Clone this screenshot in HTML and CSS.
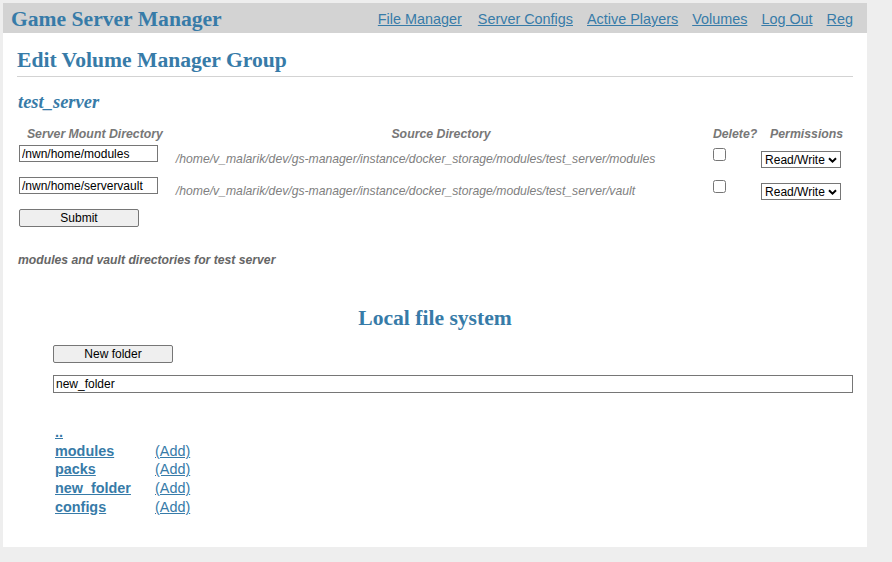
FILE: index.html
```html
<!DOCTYPE html>
<html>
<head>
<meta charset="utf-8">
<title>Edit Volume Manager Group</title>
<link rel="stylesheet" href="styles.css">
</head>
<body>
<nav class="topnav">
  <h1 class="brand">Game Server Manager</h1>
  <ul class="navlinks">
    <li><a href="#">File Manager</a></li>
    <li><a href="#">Server Configs</a></li>
    <li><a href="#">Active Players</a></li>
    <li><a href="#">Volumes</a></li>
    <li><a href="#">Log Out</a></li>
    <li><a href="#">Reg</a></li>
  </ul>
</nav>
<section class="content">
  <header class="page-header">
    <h1 class="page-title">Edit Volume Manager Group</h1>
  </header>
  <h2 class="group-name">test_server</h2>
  <form class="volume-form">
    <table class="vol-table">
      <colgroup>
        <col class="c1"><col class="c2"><col class="c3"><col class="c4">
      </colgroup>
      <thead>
        <tr>
          <th>Server Mount Directory</th>
          <th>Source Directory</th>
          <th>Delete?</th>
          <th>Permissions</th>
        </tr>
      </thead>
      <tbody>
        <tr>
          <td class="mount"><input class="mount-input" type="text" value="/nwn/home/modules"></td>
          <td class="src">/home/v_malarik/dev/gs-manager/instance/docker_storage/modules/test_server/modules</td>
          <td class="del"><input class="del-box" type="checkbox"></td>
          <td class="perm">
            <span class="select-wrap">
              <select class="perm-select"><option>Read/Write</option></select>
              <svg class="chev" width="9" height="6" viewBox="0 0 9 6"><path d="M1 1.2 L4.5 4.6 L8 1.2" fill="none" stroke="#000" stroke-width="2"/></svg>
            </span>
          </td>
        </tr>
        <tr>
          <td class="mount"><input class="mount-input" type="text" value="/nwn/home/servervault"></td>
          <td class="src">/home/v_malarik/dev/gs-manager/instance/docker_storage/modules/test_server/vault</td>
          <td class="del"><input class="del-box" type="checkbox"></td>
          <td class="perm">
            <span class="select-wrap">
              <select class="perm-select"><option>Read/Write</option></select>
              <svg class="chev" width="9" height="6" viewBox="0 0 9 6"><path d="M1 1.2 L4.5 4.6 L8 1.2" fill="none" stroke="#000" stroke-width="2"/></svg>
            </span>
          </td>
        </tr>
      </tbody>
    </table>
    <button class="btn submit-btn" type="button">Submit</button>
  </form>
  <p class="note">modules and vault directories for test server</p>
  <h2 class="fs-title">Local file system</h2>
  <div class="fs">
    <button class="btn" type="button">New folder</button>
    <input class="folder-input" type="text" value="new_folder">
    <div class="listing">
      <a class="dir" href="#">..</a><span></span>
      <a class="dir" href="#">modules</a><a class="add" href="#">(Add)</a>
      <a class="dir" href="#">packs</a><a class="add" href="#">(Add)</a>
      <a class="dir" href="#">new_folder</a><a class="add" href="#">(Add)</a>
      <a class="dir" href="#">configs</a><a class="add" href="#">(Add)</a>
    </div>
  </div>
</section>
</body>
</html>
```
FILE: styles.css
```css
html {
  background: #eee;
  margin: 0;
  padding: 0;
}
body {
  margin: 3px 0 0 3px;
  width: 864px;
  background: #fff;
  font-family: "Liberation Sans", Arial, sans-serif;
  font-size: 14.4px;
  padding-bottom: 30px;
}
a {
  color: #377ba8;
}
.topnav {
  display: flex;
  align-items: center;
  box-sizing: border-box;
  height: 30px;
  background: #d3d3d3;
  padding: 2px 7px 0 8px;
}
.brand {
  flex: auto;
  margin: 0;
  font-family: "Liberation Serif", "Times New Roman", serif;
  font-size: 21.6px;
  font-weight: bold;
  color: #377ba8;
}
.navlinks {
  display: flex;
  list-style: none;
  margin: 0;
  padding: 0;
}
.navlinks a {
  display: block;
  padding: 0 7px;
}
.navlinks li:first-child a {
  padding-left: 0;
  margin-right: 2px;
}
.content {
  padding: 0 14px;
}
.page-header {
  border-bottom: 1px solid #d3d3d3;
}
.page-title {
  margin: 15px 0 0 0;
  padding-bottom: 3px;
  font-family: "Liberation Serif", "Times New Roman", serif;
  font-size: 21.6px;
  color: #377ba8;
}
.group-name {
  margin: 15px 0 12px 1px;
  font-family: "Liberation Serif", "Times New Roman", serif;
  font-style: italic;
  font-size: 18.5px;
  color: #377ba8;
}
.vol-table {
  table-layout: fixed;
  border-spacing: 2px;
  margin-left: 0;
}
.c1 { width: 152px; }
.c2 { width: 537px; }
.c3 { width: 48px; }
.c4 { width: 90px; }
.vol-table th {
  font-size: 12.3px;
  font-style: italic;
  color: #777;
  padding: 0;
  white-space: nowrap;
}
.vol-table th:nth-child(4) {
  text-align: left;
  padding-left: 9px;
}
.vol-table td {
  box-sizing: border-box;
  vertical-align: top;
  padding: 0;
  height: 30px;
}
.mount-input {
  display: block;
  box-sizing: border-box;
  width: 139px;
  height: 17px;
  margin: 2px 0 0 0;
  padding: 0 2px;
  border: 1px solid #767676;
  font-family: "Liberation Sans", Arial, sans-serif;
  font-size: 12px;
}
.vol-table td.src {
  font-size: 12.2px;
  font-style: italic;
  color: #808080;
  padding-top: 9px;
  padding-left: 3px;
  white-space: nowrap;
}
.del-box {
  margin: 5px 0 0 2px;
}
.vol-table td.perm {
  padding-top: 8px;
}
.select-wrap {
  position: relative;
  display: block;
  width: 80px;
}
.perm-select {
  display: block;
  -webkit-appearance: none;
  appearance: none;
  width: 80px;
  height: 17px;
  box-sizing: border-box;
  border: 1px solid #767676;
  border-radius: 0;
  background: #fff;
  font-family: "Liberation Sans", Arial, sans-serif;
  font-size: 12px;
  color: #000;
  padding: 0 0 0 3px;
  margin: 0;
}
.chev {
  position: absolute;
  right: 4px;
  top: 6px;
  pointer-events: none;
}
.btn {
  display: block;
  box-sizing: border-box;
  width: 120px;
  height: 18px;
  padding: 0;
  border: 1px solid #767676;
  border-radius: 2px;
  background: #efefef;
  font-family: "Liberation Sans", Arial, sans-serif;
  font-size: 12px;
  color: #000;
}
.submit-btn {
  margin: 2px 0 0 2px;
}
.note {
  margin: 26px 0 0 1px;
  font-size: 12.2px;
  font-weight: bold;
  font-style: italic;
  color: #666;
}
.fs-title {
  margin: 39px 0 0 0;
  text-align: center;
  font-family: "Liberation Serif", "Times New Roman", serif;
  font-size: 21.6px;
  color: #377ba8;
}
.fs {
  padding-left: 36px;
}
.fs .btn {
  margin-top: 14px;
}
.folder-input {
  display: block;
  box-sizing: border-box;
  width: 800px;
  height: 18px;
  margin-top: 12px;
  padding: 0 2px;
  border: 1px solid #767676;
  font-family: "Liberation Sans", Arial, sans-serif;
  font-size: 12px;
}
.listing {
  display: grid;
  grid-template-columns: 100px auto;
  justify-content: start;
  grid-auto-rows: 18.7px;
  margin-top: 31px;
  padding-left: 2px;
}
.dir {
  font-weight: bold;
}
```
